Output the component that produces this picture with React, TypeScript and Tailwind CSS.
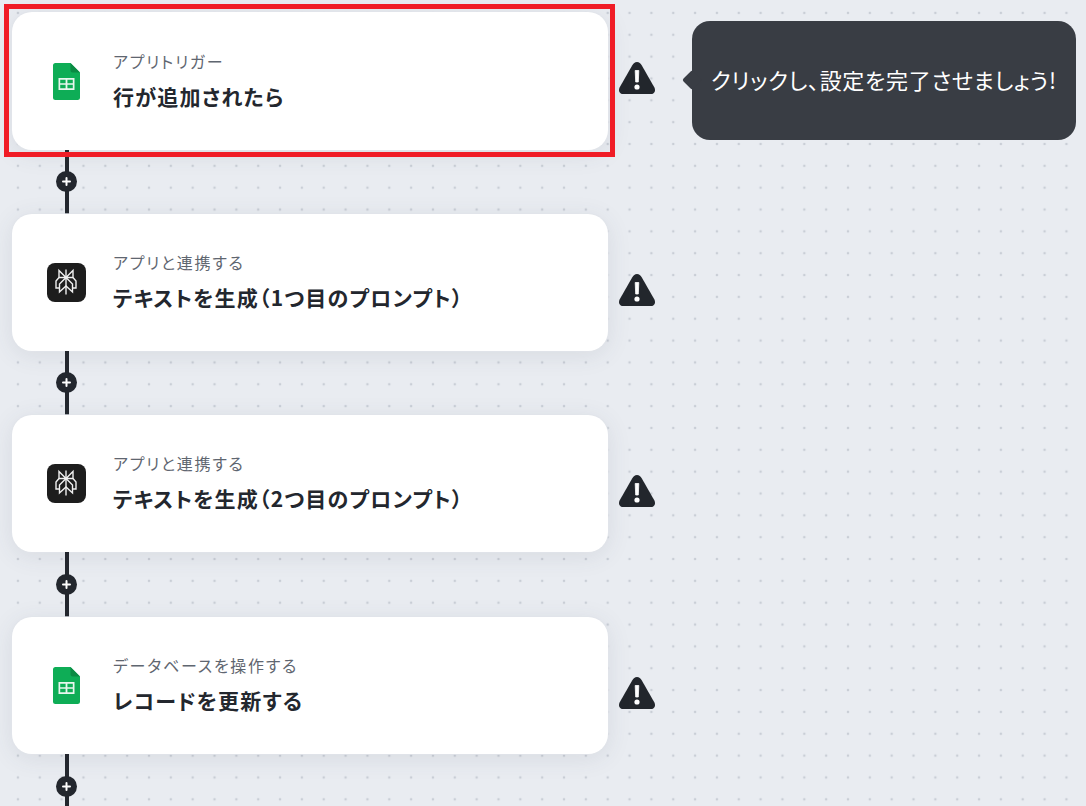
import React from "react";

const font = { fontFamily: '"Noto Sans CJK JP", "Noto Sans", sans-serif' };

function Sheets() {
  return (
    <svg width="27" height="37" viewBox="0 0 27 37">
      <path d="M2.5 0H17.5L27 9.5V34.5A2.5 2.5 0 0 1 24.5 37H2.5A2.5 2.5 0 0 1 0 34.5V2.5A2.5 2.5 0 0 1 2.5 0Z" fill="#0ead56" />
      <path d="M17.5 0L27 9.5H19.5A2 2 0 0 1 17.5 7.5Z" fill="#0a8a43" />
      <path fillRule="evenodd" clipRule="evenodd" d="M5.5 15H21.5V27H5.5ZM7.2 16.7V20.2H12.6V16.7ZM14.4 16.7V20.2H19.8V16.7ZM7.2 21.8V25.3H12.6V21.8ZM14.4 21.8V25.3H19.8V21.8Z" fill="#e8f6ee" />
    </svg>
  );
}

function Perplexity() {
  return (
    <svg width="39" height="39" viewBox="0 0 39 39">
      <rect width="39" height="39" rx="8" fill="#1d1d1d" />
      <g fill="none" stroke="#f0f0f0" strokeWidth="1.4" strokeLinejoin="miter">
        <path d="M19 6.5V31.5" />
        <path d="M12 7.5L19 14.5L26 7.5V14.5H12Z" />
        <path d="M12 14.5L9 18V25H12.5" />
        <path d="M26 14.5L29 18V25H25.5" />
        <path d="M19 14.5L12.5 21V29L19 23L25.5 29V21L19 14.5Z" />
      </g>
    </svg>
  );
}

function Warn() {
  return (
    <svg width="38" height="34" viewBox="0 0 38 34">
      <path d="M19 1C16.8 1 15.4 2.3 14.3 4.2L1.6 26.4C0 29.6 1.6 33 5 33H33C36.4 33 38 29.6 36.4 26.4L23.7 4.2C22.6 2.3 21.2 1 19 1Z" fill="#22262c" />
      <path d="M17.2 9.5H20.8L20.3 21H17.7Z" fill="#fff" stroke="#fff" strokeWidth="0.8" strokeLinejoin="round" />
      <circle cx="19" cy="26" r="2.6" fill="#fff" />
    </svg>
  );
}

function Connector({ h, nudge }: { h: string; nudge: string }) {
  return (
    <div className={`w-[595px] ${h} flex justify-start pl-[44px]`}>
      <div className="relative w-[21px] h-full flex justify-center items-center">
        <div className="absolute top-0 bottom-0 left-[8.5px] w-[4px] bg-[#23272e]" />
        <div className={`relative ${nudge} w-[21px] h-[21px] rounded-full bg-[#23272e] flex items-center justify-center`}>
          <svg width="9" height="9" viewBox="0 0 9 9">
            <path d="M4.5 1V8M1 4.5H8" stroke="#fff" strokeWidth="2" strokeLinecap="round" />
          </svg>
        </div>
      </div>
    </div>
  );
}

function Step({ icon, label, title, h, warnTop }: { icon: React.ReactNode; label: string; title: string; h: string; warnTop: string }) {
  return (
    <div className="flex items-start">
      <div className={`relative w-[595.5px] ${h} bg-white rounded-[20px] shadow-[0_0_0_1px_rgba(225,228,234,0.7),0_4px_24px_rgba(60,70,90,0.10)] flex items-center`}>
        <div className="w-[101px] shrink-0 flex justify-center pl-[8px]">{icon}</div>
        <div className="flex flex-col pb-[1px] [font-feature-settings:'palt']">
          <div className="text-[16px] leading-[20px] tracking-[1.75px] text-[#5f6670]">{label}</div>
          <div className="mt-[10px] text-[21px] leading-[30px] font-bold tracking-[1.2px] text-[#23272e]">{title}</div>
        </div>
      </div>
      <div className={`ml-[10.5px] ${warnTop}`}>
        <Warn />
      </div>
    </div>
  );
}

export default function App() {
  return (
    <div
      style={font}
      className="relative w-[1086px] h-[806px] overflow-hidden bg-[#e9ecf1] bg-[radial-gradient(circle,#c9ced6_1.4px,transparent_1.6px)] bg-[size:21.85px_21.85px] bg-[position:7px_2px] pl-[12px] pt-[12px]"
    >
      <Step icon={<Sheets />} label="アプリトリガー" title="行が追加されたら" h="h-[138px]" warnTop="mt-[49px]" />
      <Connector h="h-[64px]" nudge="top-[-1px]" />
      <Step icon={<Perplexity />} label="アプリと連携する" title="テキストを生成（1つ目のプロンプト）" h="h-[137px]" warnTop="mt-[59px]" />
      <Connector h="h-[64px]" nudge="top-[-1px]" />
      <Step icon={<Perplexity />} label="アプリと連携する" title="テキストを生成（2つ目のプロンプト）" h="h-[137px]" warnTop="mt-[59px]" />
      <Connector h="h-[65px]" nudge="top-0" />
      <Step icon={<Sheets />} label="データベースを操作する" title="レコードを更新する" h="h-[137px]" warnTop="mt-[59px]" />
      <Connector h="h-[65px]" nudge="top-0" />

      <div className="absolute left-[4px] top-[4px] w-[611px] h-[153px] border-[5px] border-[#f01c26]" />

      <div className="absolute left-[692px] top-[21px] w-[384px] h-[119px] rounded-[18px] bg-[#393d44] flex items-center pl-[19px] pb-[2px] text-[22px] tracking-[0.7px] text-white whitespace-nowrap [font-feature-settings:'palt']">
        クリックし、設定を完了させましょう!
        <div className="absolute left-[-7px] top-[52px] w-[14px] h-[14px] rotate-45 bg-[#393d44] rounded-[2px]" />
      </div>
    </div>
  );
}
